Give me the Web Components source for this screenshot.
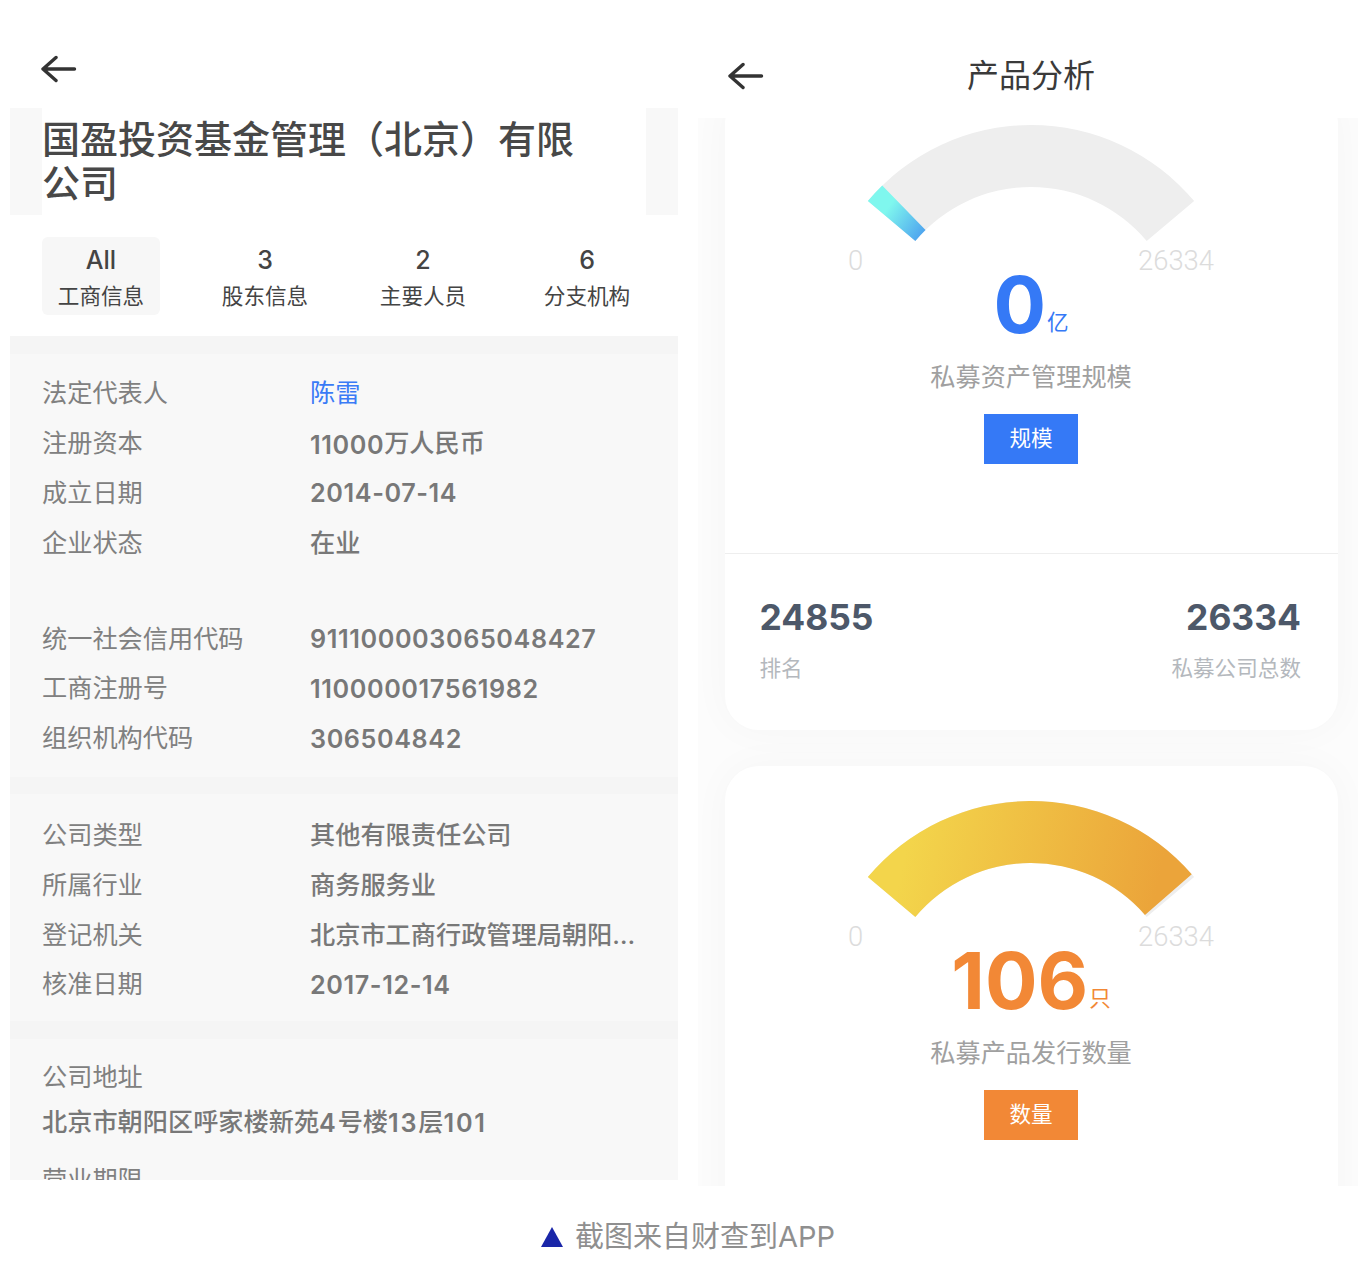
<!DOCTYPE html>
<html lang="zh">
<head>
<meta charset="UTF-8">
<title>财查到</title>
<style>
  html, body { margin: 0; background: #fff; }
  body { font-family: Inter, "Noto Sans CJK SC", sans-serif; }
</style>
</head>
<body>
<shot-page>
  <company-panel slot="left" name="国盈投资基金管理（北京）有限公司">
    <tab-item active num="All" label="工商信息"></tab-item>
    <tab-item num="3" label="股东信息"></tab-item>
    <tab-item num="2" label="主要人员"></tab-item>
    <tab-item num="6" label="分支机构"></tab-item>

    <info-group slot="info" pad="12.5px 0 15.5px">
      <info-row label="法定代表人" link>陈雷</info-row>
      <info-row label="注册资本"><span class="n">11000</span>万人民币</info-row>
      <info-row label="成立日期" digits><span class="n">2014-07-14</span></info-row>
      <info-row label="企业状态">在业</info-row>
      <div style="height:46px"></div>
      <info-row label="统一社会信用代码" digits><span class="n">911100003065048427</span></info-row>
      <info-row label="工商注册号" digits><span class="n">110000017561982</span></info-row>
      <info-row label="组织机构代码" digits><span class="n">306504842</span></info-row>
    </info-group>
    <info-group slot="info" pad="14px 0 14px">
      <info-row label="公司类型">其他有限责任公司</info-row>
      <info-row label="所属行业">商务服务业</info-row>
      <info-row label="登记机关">北京市工商行政管理局朝阳分局</info-row>
      <info-row label="核准日期" digits><span class="n">2017-12-14</span></info-row>
    </info-group>
    <info-group slot="info" pad="16px 0 0">
      <info-block label="公司地址">北京市朝阳区呼家楼新苑<span class="n">4</span>号楼<span class="n">13</span>层<span class="n">101</span></info-block>
      <info-block label="营业期限"></info-block>
    </info-group>
  </company-panel>

  <product-panel slot="right" heading="产品分析">
    <gauge-card theme="blue" value="0" unit="亿" label="私募资产管理规模" button="规模" from="-50" to="-44.3">
      <stat-pair left-num="24855" left-label="排名" right-num="26334" right-label="私募公司总数"></stat-pair>
    </gauge-card>
    <gauge-card theme="orange" value="106" unit="只" label="私募产品发行数量" button="数量" from="-50" to="49"></gauge-card>
  </product-panel>

  <shot-caption slot="caption">截图来自财查到APP</shot-caption>
</shot-page>

<script>
  // Page frame: two phone screens side by side and the caption under them
  class ShotPage extends HTMLElement {
    constructor() {
      super();
      this.attachShadow({ mode: 'open' });
      this.shadowRoot.innerHTML = `
        <style>
          :host { display: block; width: 1360px; height: 1268px; overflow: hidden; }
          .screens { display: grid; grid-template-columns: 668px 660px; column-gap: 20px; padding-left: 10px; align-items: start; }
        </style>
        <div class="screens">
          <slot name="left"></slot>
          <slot name="right"></slot>
        </div>
        <slot name="caption"></slot>
      `;
    }
  }

  class BackArrow extends HTMLElement {
    constructor() {
      super();
      this.attachShadow({ mode: 'open' });
      this.shadowRoot.innerHTML = `
        <style>
          :host { display: block; width: 36px; height: 28px; }
          svg { display: block; }
        </style>
        <svg width="36" height="28" viewBox="0 0 36 28" fill="none" stroke="#333" stroke-width="3.4" stroke-linecap="round" stroke-linejoin="round">
          <path d="M15 2.5 2 14l13 11.5M2 14h31.5"/>
        </svg>
      `;
    }
  }

  class TabItem extends HTMLElement {
    constructor() {
      super();
      this.attachShadow({ mode: 'open' });
      this.shadowRoot.innerHTML = `
        <style>
          :host { display: flex; flex-direction: column; align-items: center; width: 118px; height: 78px; border-radius: 6px; color: #444; box-sizing: border-box; padding-top: 7px; }
          :host([active]) { background: #f7f7f7; }
          .num { font-size: 25px; line-height: 32px; font-weight: 500; }
          .label { font-size: 21.6px; line-height: 30px; margin-top: 5px; white-space: nowrap; }
        </style>
        <div class="num"></div>
        <div class="label"></div>
      `;
    }
    connectedCallback() {
      this.shadowRoot.querySelector('.num').textContent = this.getAttribute('num');
      this.shadowRoot.querySelector('.label').textContent = this.getAttribute('label');
    }
  }

  class InfoRow extends HTMLElement {
    constructor() {
      super();
      this.attachShadow({ mode: 'open' });
      this.shadowRoot.innerHTML = `
        <style>
          :host { display: grid; grid-template-columns: 268px 336px; height: 49.8px; align-items: center; font-size: 25.2px; color: #808080; }
          .value { font-weight: 500; color: #787878; white-space: nowrap; overflow: hidden; text-overflow: ellipsis; }
          ::slotted(.n) { font-weight: 600; letter-spacing: .6px; vertical-align: -2px; }
          :host([digits]) .value { padding-top: 3px; }
          :host([link]) .value { color: #3a7bf6; font-weight: 400; }
        </style>
        <div class="label"></div>
        <div class="value"><slot></slot></div>
      `;
    }
    connectedCallback() {
      this.shadowRoot.querySelector('.label').textContent = this.getAttribute('label');
    }
  }

  // Label above its value, for the long address style fields
  class InfoBlock extends HTMLElement {
    constructor() {
      super();
      this.attachShadow({ mode: 'open' });
      this.shadowRoot.innerHTML = `
        <style>
          :host { display: block; font-size: 25.2px; line-height: 45px; color: #808080; padding-bottom: 13px; }
          .value { font-weight: 500; color: #787878; height: 45px; }
          ::slotted(.n) { font-weight: 600; letter-spacing: 1.8px; vertical-align: -1px; }
        </style>
        <div class="label"></div>
        <div class="value"><slot></slot></div>
      `;
    }
    connectedCallback() {
      this.shadowRoot.querySelector('.label').textContent = this.getAttribute('label');
    }
  }

  class InfoGroup extends HTMLElement {
    constructor() {
      super();
      this.attachShadow({ mode: 'open' });
      this.shadowRoot.innerHTML = `
        <style>
          :host { display: block; background: #f8f8f8; }
          .inner { padding: 14px 32px 14px; }
        </style>
        <div class="inner"><slot></slot></div>
      `;
    }
    connectedCallback() {
      if (this.hasAttribute('pad')) {
        const p = this.getAttribute('pad').split(' ');
        const inner = this.shadowRoot.querySelector('.inner');
        inner.style.paddingTop = p[0];
        inner.style.paddingBottom = p[2];
      }
    }
  }

  class CompanyPanel extends HTMLElement {
    constructor() {
      super();
      this.attachShadow({ mode: 'open' });
      this.shadowRoot.innerHTML = `
        <style>
          :host { display: block; height: 1180px; overflow: hidden; }
          .bar { height: 108px; box-sizing: border-box; padding: 55px 0 0 31px; }
          .title-band { background: #f8f8f8; padding: 0 32px; }
          h1 { margin: 0; background: #fff; padding: 9px 40px 10px 0; font-size: 38px; line-height: 44px; font-weight: 500; color: #484848; }
          .tabs { display: grid; grid-template-columns: 164px 158px 164px 118px; justify-items: start; padding: 22px 32px 21px; }
          .info { display: flex; flex-direction: column; row-gap: 17.5px; background: #f5f5f5; padding-top: 18px; }
        </style>
        <div class="bar"><back-arrow></back-arrow></div>
        <div class="title-band"><h1></h1></div>
        <div class="tabs"><slot></slot></div>
        <div class="info"><slot name="info"></slot></div>
      `;
    }
    connectedCallback() {
      this.shadowRoot.querySelector('h1').textContent = this.getAttribute('name');
    }
  }

  class ProductPanel extends HTMLElement {
    constructor() {
      super();
      this.attachShadow({ mode: 'open' });
      this.shadowRoot.innerHTML = `
        <style>
          :host { display: block; height: 1186px; overflow: hidden; }
          .bar { position: relative; height: 118px; box-sizing: border-box; padding: 62px 0 0 30px; }
          .heading { position: absolute; left: 0; right: 0; top: 53px; text-align: center; font-size: 32px; line-height: 46px; color: #3a3a3a; padding-left: 6px; }
          .scroll { height: 1068px; overflow: hidden; background: #fcfcfc; padding: 0 20px 0 27px; }
          .cards { display: flex; flex-direction: column; row-gap: 36px; margin-top: -28px; }
        </style>
        <div class="bar"><back-arrow></back-arrow><div class="heading"></div></div>
        <div class="scroll"><div class="cards"><slot></slot></div></div>
      `;
    }
    connectedCallback() {
      this.shadowRoot.querySelector('.heading').textContent = this.getAttribute('heading');
    }
  }

  const THEMES = {
    blue: { main: '#3579f6', c1: '#7ff7ee', c2: '#4fa6ef', x1: 15, y1: 90, x2: 50, y2: 115 },
    orange: { main: '#f28836', c1: '#f3d54b', c2: '#eba43a', x1: 40, y1: 35, x2: 290, y2: 85 }
  };

  // Annular sector around (163, 213), angles are degrees from straight up
  function sector(from, to) {
    const R = 213, r = 151, cx = 163, cy = 213;
    const pt = (rad, deg) => {
      const a = deg * Math.PI / 180;
      return (cx + rad * Math.sin(a)).toFixed(2) + ' ' + (cy - rad * Math.cos(a)).toFixed(2);
    };
    return `M${pt(R, from)}A${R} ${R} 0 0 1 ${pt(R, to)}L${pt(r, to)}A${r} ${r} 0 0 0 ${pt(r, from)}Z`;
  }

  class GaugeCard extends HTMLElement {
    constructor() {
      super();
      this.attachShadow({ mode: 'open' });
    }
    connectedCallback() {
      const a = n => this.getAttribute(n);
      const t = THEMES[a('theme')];
      const id = 'grad-' + a('theme');
      this.shadowRoot.innerHTML = `
        <style>
          :host { display: block; min-height: 640px; background: #fff; border-radius: 34px; box-shadow: 0 0 40px rgba(0,0,0,.03); }
          .top { display: flex; flex-direction: column; align-items: center; padding: 35px 1px 0 0; }
          svg { display: block; overflow: visible; }
          .scale { display: flex; justify-content: space-between; width: 366px; margin-top: 4px; height: 30px; line-height: 32px; font-family: Roboto, sans-serif; font-weight: 300; font-size: 27.4px; color: #dcdcdc; }
          .value { display: flex; align-items: baseline; justify-content: center; height: 60px; line-height: 60px; color: ${t.main}; }
          .big { font-weight: 700; font-size: 78px; }
          .unit { font-size: 21.6px; margin-left: 1px; transform: translateY(-3px); }
          .label { margin-top: 24px; font-size: 25.2px; line-height: 36px; color: #a0a0a0; }
          .btn { margin-top: 19px; width: 94px; height: 50px; line-height: 48px; text-align: center; font-size: 21.6px; color: #fff; background: ${t.main}; }
        </style>
        <div class="top">
          <svg width="326" height="116" viewBox="0 0 326 116">
            <defs>
              <linearGradient id="${id}" gradientUnits="userSpaceOnUse" x1="${t.x1}" y1="${t.y1}" x2="${t.x2}" y2="${t.y2}">
                <stop offset="0" stop-color="${t.c1}"/><stop offset="1" stop-color="${t.c2}"/>
              </linearGradient>
            </defs>
            <path d="${sector(-50, 50)}" fill="#eeeeee"/>
            <path d="${sector(+a('from'), +a('to'))}" fill="url(#${id})"/>
          </svg>
          <div class="scale"><span>0</span><span>26334</span></div>
          <div class="value"><span class="big">${a('value')}</span><span class="unit">${a('unit')}</span></div>
          <div class="label">${a('label')}</div>
          <div class="btn">${a('button')}</div>
        </div>
        <slot></slot>
      `;
    }
  }

  class StatPair extends HTMLElement {
    constructor() {
      super();
      this.attachShadow({ mode: 'open' });
    }
    connectedCallback() {
      const a = n => this.getAttribute(n);
      this.shadowRoot.innerHTML = `
        <style>
          :host { display: flex; justify-content: space-between; margin-top: 89px; height: 177px; box-sizing: border-box; border-top: 1.5px solid #eee; padding: 41px 37px 0 34.5px; }
          .num { font-size: 35.4px; line-height: 46px; font-weight: 700; color: #4d5869; }
          .label { font-size: 21.6px; line-height: 32px; margin-top: 11px; color: #b4b8bd; }
          .right { text-align: right; }
        </style>
        <div><div class="num">${a('left-num')}</div><div class="label">${a('left-label')}</div></div>
        <div class="right"><div class="num">${a('right-num')}</div><div class="label">${a('right-label')}</div></div>
      `;
    }
  }

  class ShotCaption extends HTMLElement {
    constructor() {
      super();
      this.attachShadow({ mode: 'open' });
      this.shadowRoot.innerHTML = `
        <style>
          :host { display: flex; align-items: center; justify-content: center; column-gap: 12px; padding: 33px 0 0 16px; font-size: 29px; line-height: 36px; color: #8f8f8f; }
          .tri { width: 0; height: 0; border-left: 11.5px solid transparent; border-right: 11.5px solid transparent; border-bottom: 20px solid #1a26a8; }
        </style>
        <span class="tri"></span><span><slot></slot></span>
      `;
    }
  }

  customElements.define('shot-page', ShotPage);
  customElements.define('back-arrow', BackArrow);
  customElements.define('tab-item', TabItem);
  customElements.define('info-row', InfoRow);
  customElements.define('info-block', InfoBlock);
  customElements.define('info-group', InfoGroup);
  customElements.define('company-panel', CompanyPanel);
  customElements.define('product-panel', ProductPanel);
  customElements.define('gauge-card', GaugeCard);
  customElements.define('stat-pair', StatPair);
  customElements.define('shot-caption', ShotCaption);
</script>
</body>
</html>
